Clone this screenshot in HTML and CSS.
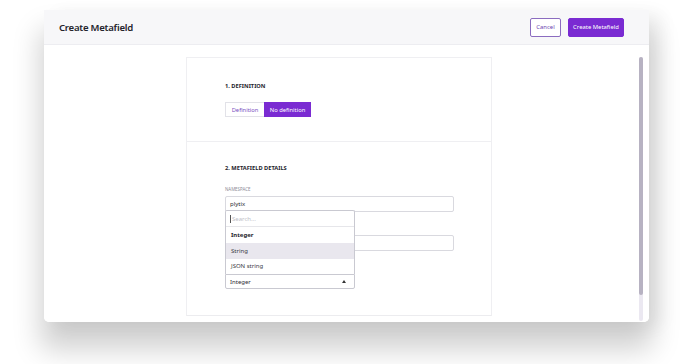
FILE: index.html
```html
<!DOCTYPE html>
<html lang="en">
<head>
<meta charset="utf-8">
<title>Create Metafield</title>
<link rel="stylesheet" href="styles.css">
</head>
<body>
<div class="window">
  <header class="header">
    <h1 class="title">Create Metafield</h1>
    <div class="actions">
      <button class="btn btn-outline">Cancel</button>
      <button class="btn btn-primary">Create Metafield</button>
    </div>
  </header>
  <div class="body">
    <div class="main">
      <div class="card">
        <section class="section sec1">
          <h2 class="sec-title">1. DEFINITION</h2>
          <div class="toggle">
            <span class="tg tg-off">Definition</span>
            <span class="tg tg-on">No definition</span>
          </div>
        </section>
        <section class="section sec2">
          <h2 class="sec-title">2. METAFIELD DETAILS</h2>
          <div class="field">
            <label class="flabel">NAMESPACE</label>
            <div class="input">plytix</div>
          </div>
          <div class="field">
            <span class="flabel" aria-hidden="true"></span>
            <div class="input"></div>
          </div>
          <div class="field">
            <span class="flabel" aria-hidden="true"></span>
            <div class="select-wrap">
              <div class="menu">
                <div class="menu-search"><span class="caret"></span>Search...</div>
                <div class="opt opt-sel">Integer</div>
                <div class="opt opt-hover">String</div>
                <div class="opt">JSON string</div>
              </div>
              <div class="select">
                <span>Integer</span>
                <span class="arrow"></span>
              </div>
            </div>
          </div>
        </section>
      </div>
    </div>
    <div class="scroll"><div class="thumb"></div></div>
  </div>
</div>
</body>
</html>
```

FILE: styles.css
```css
* { box-sizing: border-box; }
html, body { margin: 0; padding: 0; background: #ffffff; }
body {
  font-family: "Noto Sans", "Open Sans", sans-serif;
  color: #2b2b33;
  padding: 10px 0 0 44px;
  min-height: 364px;
}
.window {
  position: relative;
  width: 605px;
  height: 312px;
  background: #fff;
  border-radius: 0 0 5px 5px;
  box-shadow: 0 24px 28px 4px rgba(0, 0, 0, 0.18), 12px 4px 18px rgba(0, 0, 0, 0.06);
  display: flex;
  flex-direction: column;
}
.header {
  height: 35px;
  flex: none;
  background: #f7f7f9;
  border-bottom: 1px solid #ededf1;
  display: flex;
  align-items: center;
  justify-content: space-between;
  padding: 0 25px 0 15px;
}
.title {
  margin: 0;
  font-size: 9.6px;
  font-weight: 600;
  letter-spacing: -0.25px;
  color: #23232b;
}
.actions { display: flex; gap: 7px; }
.btn {
  font-family: inherit;
  font-size: 5.9px;
  height: 19px;
  border-radius: 2px;
  padding: 0;
  cursor: pointer;
}
.btn-outline {
  width: 31px;
  background: #fff;
  color: #6b3fb0;
  border: 1px solid #8b6cc0;
}
.btn-primary {
  width: 56px;
  background: #7a2bd2;
  color: #fff;
  border: 1px solid #7a2bd2;
}
.body {
  flex: 1;
  display: flex;
  padding-top: 12px;
  background: #fff;
  border-radius: 0 0 5px 5px;
}
.main {
  flex: 1;
  padding-left: 142px;
}
.card {
  width: 306px;
  border: 1px solid #efeff2;
  border-bottom: 1px solid #ececef;
}
.section { padding: 0 38px; }
.sec1 {
  padding-top: 23px;
  padding-bottom: 24px;
  border-bottom: 1px solid #efeff2;
}
.sec2 {
  padding-top: 21px;
  padding-bottom: 26px;
}
.sec-title {
  margin: 0;
  font-size: 5.7px;
  line-height: 10px;
  font-weight: 700;
  color: #25252d;
}
.toggle {
  display: flex;
  margin-top: 11px;
}
.tg {
  height: 15px;
  font-size: 5.8px;
  display: flex;
  align-items: center;
  justify-content: center;
}
.tg-off {
  width: 39px;
  color: #7a4fbf;
  border: 1px solid #e2e2e8;
  border-right: none;
}
.tg-on {
  width: 47px;
  color: #fff;
  background: #7a2bd2;
}
.field { margin-top: 12px; }
.flabel {
  display: block;
  height: 8px;
  font-size: 4.4px;
  line-height: 8px;
  color: #8a8a95;
  margin-bottom: 3px;
}
.input {
  width: 229px;
  height: 16px;
  border: 1px solid #d9d9df;
  border-radius: 2px;
  font-size: 6px;
  line-height: 14px;
  padding: 0 4px;
  color: #2b2b33;
}
.select-wrap {
  position: relative;
  width: 130px;
}
.select {
  height: 15px;
  border: 1px solid #c9c9d1;
  border-radius: 0 0 2px 2px;
  display: flex;
  align-items: center;
  justify-content: space-between;
  padding: 0 8px 0 4px;
  font-size: 6px;
  color: #2b2b33;
  background: #fff;
}
.arrow {
  width: 0;
  height: 0;
  border-left: 2.5px solid transparent;
  border-right: 2.5px solid transparent;
  border-bottom: 3px solid #333;
}
.menu {
  position: absolute;
  left: 0;
  right: 0;
  bottom: 100%;
  background: #fff;
  border: 1px solid #c9c9d1;
  border-bottom: none;
  border-radius: 2px 2px 0 0;
  z-index: 2;
}
.menu-search {
  height: 16px;
  font-size: 6px;
  color: #c0c0c8;
  display: flex;
  align-items: center;
  padding-left: 4px;
  border-bottom: 1px solid #e6e6ea;
}
.caret {
  width: 1px;
  height: 8px;
  background: #555;
  margin-right: 1px;
}
.opt {
  height: 15.5px;
  font-size: 6px;
  display: flex;
  align-items: center;
  padding-left: 5px;
  color: #3a3a44;
}
.opt-sel { font-weight: 700; color: #25252d; height: 16px; }
.opt-hover { background: #e9e7ee; }
.scroll {
  width: 4px;
  height: 264px;
  margin-right: 6px;
  background: #ebe8f1;
  border-radius: 2px;
}
.thumb {
  height: 238px;
  background: #b7b2c2;
  border-radius: 2px;
}
```
